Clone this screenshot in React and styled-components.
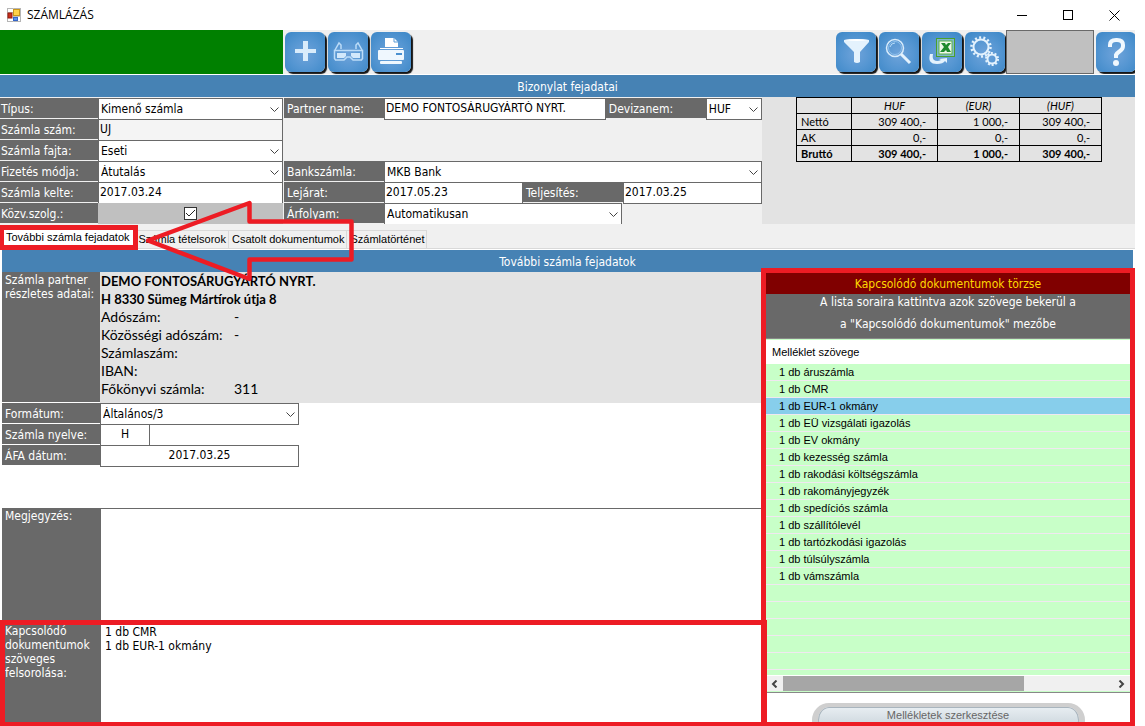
import React, { useState } from 'react';
import styled, { createGlobalStyle } from 'styled-components';

const RED = '#ed1c24';
const GRAY = '#696969';
const BLUE = '#4682b4';

const UI_FONT = '"DejaVu Sans Condensed", "DejaVu Sans", sans-serif';
const SMALL_FONT = '"Liberation Sans", Arial, sans-serif';
const REPORT_FONT = 'Lato, sans-serif';

const documents = [
  '1 db áruszámla',
  '1 db CMR',
  '1 db EUR-1 okmány',
  '1 db EÜ vizsgálati igazolás',
  '1 db EV okmány',
  '1 db kezesség számla',
  '1 db rakodási költségszámla',
  '1 db rakományjegyzék',
  '1 db spedíciós számla',
  '1 db szállítólevél',
  '1 db tartózkodási igazolás',
  '1 db túlsúlyszámla',
  '1 db vámszámla',
];

const totals = [
  { name: 'Nettó', values: ['309 400,-', '1 000,-', '309 400,-'] },
  { name: 'AK', values: ['0,-', '0,-', '0,-'] },
  { name: 'Bruttó', values: ['309 400,-', '1 000,-', '309 400,-'], strong: true },
];

const partnerLines = [
  ['Adószám:', '-'],
  ['Közösségi adószám:', '-'],
  ['Számlaszám:', ''],
  ['IBAN:', ''],
  ['Főkönyvi számla:', '311'],
];

const tabs = ['További számla fejadatok', 'Számla tételsorok', 'Csatolt dokumentumok', 'Számlatörténet'];

/* ---------- icons ---------- */

const AppIcon = () => (
  <svg width="14" height="14" viewBox="0 0 14 14" aria-hidden="true">
    <rect x="0.5" y="0.5" width="13" height="13" fill="#fff" stroke="#b5b5b5" />
    <path d="M6.5 0v14M0 4.500h6M6.500 8.500h7" stroke="#c0c0c0" />
    <rect x="6.500" y="1.500" width="6" height="6" fill="#ffd24a" stroke="#c9971c" />
    <rect x="1" y="5" width="4" height="5" fill="#c8301c" stroke="#96180c" />
    <rect x="6.500" y="9.500" width="4" height="3" fill="#5d94ee" stroke="#3566c8" />
  </svg>
);

const PlusIcon = () => (
  <svg width="40" height="40" viewBox="0 0 40 40" aria-hidden="true">
    <path d="M18 9h5v8h8v4h-8v8h-5v-8h-8v-4h8z" fill="#d9ecfb" />
  </svg>
);

const GlassesIcon = () => (
  <svg width="40" height="40" viewBox="0 0 40 40" fill="none" aria-hidden="true">
    <path d="M7 18l4-7l2 2v4M34 18l-4-7l-2 2v4" stroke="#bcdcf8" strokeWidth="1.500" />
    <path d="M6.500 18.500h28v8l-1 1.500h-8.500l-3-3h-3l-3 3H7.500l-1-1.500z" stroke="#bcdcf8" strokeWidth="1.500" />
    <path d="M9 21h9v3l-2 2H9zM23 21h9v5h-7l-2-2z" fill="#d2e8fb" />
  </svg>
);

const PrinterIcon = () => (
  <svg width="40" height="40" viewBox="0 0 40 40" aria-hidden="true">
    <path d="M14 6h9l4 4v5H14z" fill="#fff" />
    <path d="M23 6v4h4" fill="none" stroke="#5b9bd5" />
    <path d="M9 16h23v1H9z" fill="#fff" />
    <rect x="7" y="18" width="26" height="10" rx="1" fill="#eff7fe" />
    <rect x="25" y="21" width="6" height="2" fill="#4a90d0" />
    <rect x="9" y="29" width="22" height="3" rx="1" fill="#eff7fe" />
  </svg>
);

const FilterIcon = () => (
  <svg width="40" height="40" viewBox="0 0 40 40" aria-hidden="true">
    <path d="M8 8q12-2 25 0v2l-9 10v10q-3 2-6 0V20L8 10z" fill="#e4f2fd" />
    <path d="M8 8q12-2 25 0q-12 2-25 0z" fill="#fff" />
  </svg>
);

const SearchIcon = () => (
  <svg width="40" height="40" viewBox="0 0 40 40" fill="none" aria-hidden="true">
    <circle cx="16" cy="16" r="8.500" stroke="#d9ecfb" strokeWidth="1.500" />
    <circle cx="16" cy="16" r="6.500" stroke="#8fc0ec" />
    <path d="M11 15q1-4 5-4" stroke="#b8dbf7" />
    <path d="M22 22l9 9" stroke="#e4f2fd" strokeWidth="3" />
  </svg>
);

const ExcelIcon = () => (
  <svg width="40" height="40" viewBox="0 0 40 40" aria-hidden="true">
    <rect x="14.500" y="6.500" width="18" height="18" fill="#7fb8c8" stroke="#4aa02c" />
    <rect x="17" y="9" width="13" height="13" fill="#eef8ea" stroke="#5ab04a" />
    <path d="M19 11h4l1 2 2-2h3l-3 4 3 5h-4l-1-2-2 2h-4l4-5z" fill="#1f8a2e" />
    <path d="M8 22q-3 10 7 10q6 0 8-3l2 2v-5l-8 1 2 1q-4 2-7 0q-2-2-1-6z" fill="#e4f2fd" />
  </svg>
);

const GearsIcon = () => (
  <svg width="40" height="40" viewBox="0 0 40 40" fill="none" aria-hidden="true">
    <circle cx="16" cy="15" r="7.500" stroke="#e4f2fd" strokeWidth="2" />
    <circle cx="16" cy="15" r="9.500" stroke="#e4f2fd" strokeWidth="2.500" strokeDasharray="2 2.260" />
    <circle cx="27" cy="27" r="4.500" stroke="#e4f2fd" strokeWidth="2" />
    <circle cx="27" cy="27" r="6" stroke="#e4f2fd" strokeWidth="2" strokeDasharray="2 1.770" />
  </svg>
);

const HelpIcon = () => (
  <svg width="40" height="40" viewBox="0 0 40 40" fill="none" aria-hidden="true">
    <path d="M14 15v-2q0-5 6-5h1q6 0 6 5v1q0 3-3 5t-4 4v3" stroke="#f0f8fe" strokeWidth="4" />
    <circle cx="20" cy="31" r="3" fill="#f0f8fe" />
  </svg>
);

const Chevron = () => (
  <svg width="9" height="6" viewBox="0 0 9 6" aria-hidden="true">
    <path d="M0.500 0.500l4 4 4-4" fill="none" stroke="#444" />
  </svg>
);

const ArrowMark = () => (
  <svg width="212" height="88" viewBox="0 0 212 88" aria-hidden="true">
    <path
      d="M4 42.500L105.500 5V23.500H207.500V61.500H105.500V81z"
      fill="none"
      stroke={RED}
      strokeWidth="4.500"
      strokeLinejoin="round"
    />
  </svg>
);

/* ---------- layout ---------- */

const GlobalStyle = createGlobalStyle`
  * { box-sizing: border-box; }
  body { margin: 0; background: #fff; }
  button, input, select, textarea { font: inherit; margin: 0; border-radius: 0; }
`;

const Window = styled.div`
  display: flex;
  flex-direction: column;
  height: 100vh;
  padding-right: 10px;
  overflow: hidden;
  background: #fff;
  color: #000;
  font: 12px/14px ${UI_FONT};
`;

const TitleBar = styled.header`
  display: flex;
  align-items: center;
  flex: none;
  height: 30px;
  padding: 0 7px;
  gap: 6px;

  h1 {
    flex: 1;
    margin: 0;
    font: 12px/16px "Open Sans", sans-serif;
  }
`;

const WindowButton = styled.button`
  display: flex;
  align-items: center;
  justify-content: center;
  width: 40px;
  height: 28px;
  padding: 0;
  border: 0;
  background: none;

  &:last-child { width: 28px; margin-left: 6px; }
`;

const Toolbar = styled.div`
  display: flex;
  flex: none;
  height: 45px;
  background: #f0f0f0;
  border-bottom: 1px solid #fff;
`;

const StatusBlock = styled.div`
  width: 283px;
  background: #008000;
`;

const ToolGroup = styled.div`
  display: flex;
  gap: 3px;
  padding: ${({ $end }) => ($end ? '2px 1px' : '2px')};
  margin-left: ${({ $end }) => ($end ? 'auto' : '0')};
`;

const ToolButton = styled.button`
  width: 40px;
  height: 40px;
  padding: 0;
  border: 0;
  border-radius: 6px;
  background: radial-gradient(circle at 50% 55%, #6fa3da 0%, #5596d2 50%, #3a86c6 100%);
  box-shadow: 2px 2px 1px #151515;

  svg { display: block; }
`;

const Placeholder = styled.div`
  width: 88px;
  background: #c0c0c0;
  border: 1px solid ${GRAY};
`;

const HelpGroup = styled.div`
  width: 41px;
  padding: 2px;
  overflow: hidden;
`;

const SectionTitle = styled.h2`
  flex: none;
  height: 22px;
  margin: 0 ${({ $inset }) => ($inset ? '2px' : '0')};
  padding-top: 4px;
  background: ${BLUE};
  color: #fff;
  font: 12px/16px ${UI_FONT};
  text-align: center;
`;

const HeaderArea = styled.section`
  display: grid;
  grid-template-columns: minmax(0, 762fr) minmax(0, 373fr);
  flex: none;
  background: #f0f0f0;
`;

const HeaderForm = styled.form`
  padding-top: 1px;
`;

const FormRow = styled.div`
  display: flex;
  align-items: flex-start;
  height: 21px;
`;

const RowPart = styled.div`
  display: flex;
  flex: ${({ $grow }) => $grow} 1 0;
  min-width: 0;
  margin-left: ${({ $gap }) => ($gap ? '1px' : '0')};
`;

const Label = styled.label`
  flex: none;
  width: ${({ $narrow }) => ($narrow ? '98px' : '100px')};
  height: 20px;
  padding: 4px 0 0 ${({ $first }) => ($first ? '1px' : '3px')};
  background: ${GRAY};
  color: #fff;
  white-space: nowrap;
`;

const Input = styled.input`
  flex: ${({ $grow }) => $grow || 1} 1 0;
  min-width: 0;
  height: 22px;
  padding: 0 1px 3px;
  border: 1px solid ${GRAY};
  background: ${({ readOnly }) => (readOnly ? '#f4f4f4' : '#fff')};
  text-align: ${({ $center }) => ($center ? 'center' : 'left')};
  outline: 0;
`;

const SelectBox = styled.div`
  position: relative;
  flex: ${({ $grow }) => $grow || 1} 1 0;
  min-width: 0;
  height: 22px;

  select {
    display: block;
    width: 100%;
    height: 22px;
    padding: 0 20px 1px 2px;
    appearance: none;
    border: 1px solid ${GRAY};
    background: #fff;
    color: #000;
    outline: 0;
  }

  svg {
    position: absolute;
    top: 9px;
    right: 4px;
    pointer-events: none;
  }
`;

const CheckCell = styled.div`
  display: flex;
  align-items: center;
  justify-content: center;
  flex: 1;
  height: 21px;
  background: #c0c0c0;

  input {
    width: 13px;
    height: 13px;
    appearance: none;
    border: 1px solid #333;
    background: #fff;
  }

  svg {
    position: absolute;
    pointer-events: none;
  }
`;

const Spacer = styled.div`
  flex: ${({ $grow }) => $grow} 1 0;
`;

const TotalsPane = styled.div`
  padding-left: 34px;
  background: #e3e3e3;
`;

const TotalsTable = styled.table`
  border-collapse: collapse;
  font: 11px/15px ${REPORT_FONT};

  th, td {
    height: 16px;
    padding: 0 11px 0 4px;
    border: 1px solid #000;
    text-align: right;
    font-weight: inherit;
  }

  th[scope='row'] { text-align: left; }
  thead th { padding: 0 4px; text-align: center; font-style: italic; font-weight: 400; }
`;

const TotalsRow = styled.tr`
  font-weight: ${({ $strong }) => ($strong ? 700 : 400)};
`;

const TabBar = styled.div`
  position: relative;
  display: flex;
  align-items: flex-end;
  flex: none;
  height: 25px;
  margin-bottom: 1px;
  background: #f0f0f0;
  border-bottom: 1px solid #d9d9d9;
  font: 11px/13px ${SMALL_FONT};
`;

const Tab = styled.button`
  height: 18px;
  padding: 0 2px 0 3px;
  border: 1px solid #d9d9d9;
  border-width: 1px 1px 0 0;
  background: #f0f0f0;
  white-space: nowrap;

  &[aria-selected='true'] {
    height: 21px;
    padding: 0 5px 2px 6px;
    background: #fff;
  }
`;

const TabMark = styled.div`
  position: absolute;
  inset: 1px auto -2px -1px;
  width: 139px;
  border: 5px solid ${RED};
  pointer-events: none;
  z-index: 3;
`;

const ArrowPlace = styled.div`
  position: absolute;
  left: 144px;
  top: -26px;
  z-index: 3;
  pointer-events: none;
`;

const Body = styled.section`
  display: grid;
  grid-template-columns: minmax(0, 759fr) minmax(0, 374fr);
  grid-template-rows: minmax(0, 1fr);
  flex: 1;
  min-height: 0;
  padding-left: 2px;
`;

const Details = styled.form`
  display: flex;
  flex-direction: column;
  min-height: 0;
`;

const PartnerRow = styled.div`
  display: flex;
  flex: none;
  height: 131px;
  background: #e3e3e3;
`;

const SideLabel = styled.label`
  flex: none;
  width: 98px;
  padding: 1px 3px 0;
  background: ${GRAY};
  border-bottom: ${({ $line }) => ($line ? '1px solid #fff' : '0')};
  color: #fff;
`;

const PartnerInfo = styled.div`
  padding: 0 1px;
  font: 14px/18px ${REPORT_FONT};

  p { margin: 0; font-size: 13px; font-weight: 700; }
  dl { display: grid; grid-template-columns: 133px auto; margin: 0; }
  dt { height: 18px; }
  dd { margin: 0; }
`;

const ShortRow = styled(FormRow)`
  width: ${({ $short }) => ($short ? '148px' : '297px')};
`;

const NoteRow = styled.div`
  position: relative;
  display: flex;
  flex: ${({ $fill }) => ($fill ? '1 1 0' : '0 0 115px')};
  min-height: 0;
  margin-top: ${({ $fill }) => ($fill ? '0' : '42px')};

  textarea {
    flex: 1;
    min-width: 0;
    padding: 2px 4px;
    border: 0 solid ${GRAY};
    border-width: ${({ $fill }) => ($fill ? '0 0 0 1px' : '1px 0 0 1px')};
    resize: none;
    outline: 0;
    background: #fff;
  }
`;

const NoteMark = styled.div`
  position: absolute;
  inset: -3px -6px 0 -2px;
  border: 5px solid ${RED};
  border-bottom-width: 4px;
  pointer-events: none;
  z-index: 2;
`;

const DocPanel = styled.aside`
  position: relative;
  display: flex;
  flex-direction: column;
  min-height: 0;
  margin-top: -4px;
  border: 5px solid ${RED};
  border-bottom-width: 4px;
  background: #fff;
  z-index: 1;
`;

const DocTitle = styled.h3`
  flex: none;
  height: 21px;
  margin: 0;
  padding-top: 3px;
  background: #800000;
  color: #ffd700;
  font: 12px/16px ${UI_FONT};
  text-align: center;
`;

const DocHint = styled.p`
  flex: none;
  height: 45px;
  margin: 0;
  background: ${GRAY};
  border-bottom: 1px solid #888;
  color: #fff;
  line-height: 22px;
  text-align: center;

  span { display: block; margin-top: -3px; }
  span + span { margin-top: 0; }
`;

const DocList = styled.div`
  flex: 1;
  min-height: 0;
  overflow: hidden;
  border-top: 1px solid #c8ffc8;

  table {
    width: 100%;
    border-spacing: 0;
    font: 11px/14px ${SMALL_FONT};
  }

  th {
    height: 24px;
    padding: 0 6px;
    background: #fff;
    text-align: left;
    font-weight: 400;
  }
`;

const DocRow = styled.tr`
  background: ${({ $selected }) => ($selected ? '#87ceeb' : '#c8ffc8')};

  td {
    height: 17px;
    padding: 1px 13px;
    border-bottom: 1px solid #f0e8f0;
  }
`;

const ScrollBar = styled.div`
  display: flex;
  flex: none;
  height: 17px;
  background: #f0f0f0;
  border-top: 1px solid #fff;
  border-bottom: 1px solid #c8ffc8;

  button {
    width: 17px;
    padding: 0;
    border: 0;
    background: none;
    line-height: 0;
  }
`;

const Track = styled.div`
  flex: 1;

  div { width: 73%; height: 15px; background: #a6a6a6; }
`;

const DocFooter = styled.div`
  display: flex;
  justify-content: center;
  flex: none;
  height: 30px;
  padding-top: 10px;
  border-top: 1px solid #888;
  overflow: hidden;
`;

const EditButton = styled.button`
  display: flex;
  justify-content: center;
  align-items: flex-start;
  width: 75%;
  height: 34px;
  padding: 2px 0 0;
  border: 4px solid #cfcfcf;
  border-width: 4px 6px;
  border-radius: 17px;
  background: linear-gradient(#e8eef2, #c3ced6);
  box-shadow: inset 0 0 0 1px #a9b5be;
  color: #666;
  font: 11px/13px ${SMALL_FONT};
`;

const Select = ({ id, value, grow }) => (
  <SelectBox $grow={grow}>
    <select id={id} defaultValue={value}>
      <option>{value}</option>
    </select>
    <Chevron />
  </SelectBox>
);

const App = () => {
  const [activeTab, setActiveTab] = useState(0);
  const [selected, setSelected] = useState(2);
  const [mediated, setMediated] = useState(true);

  return (
    <Window>
      <GlobalStyle />
      <TitleBar>
        <AppIcon />
        <h1>SZÁMLÁZÁS</h1>
        <WindowButton aria-label="Minimize">
          <svg width="11" height="11"><path d="M0 5.500h10" stroke="#000" /></svg>
        </WindowButton>
        <WindowButton aria-label="Maximize">
          <svg width="11" height="11"><rect x="0.500" y="0.500" width="9" height="9" fill="none" stroke="#000" /></svg>
        </WindowButton>
        <WindowButton aria-label="Close">
          <svg width="11" height="11"><path d="M0.500 0.500l10 10M10.500 0.500l-10 10" stroke="#000" /></svg>
        </WindowButton>
      </TitleBar>

      <Toolbar>
        <StatusBlock />
        <ToolGroup>
          <ToolButton aria-label="Új"><PlusIcon /></ToolButton>
          <ToolButton aria-label="Megtekintés"><GlassesIcon /></ToolButton>
          <ToolButton aria-label="Nyomtatás"><PrinterIcon /></ToolButton>
        </ToolGroup>
        <ToolGroup $end>
          <ToolButton aria-label="Szűrés"><FilterIcon /></ToolButton>
          <ToolButton aria-label="Keresés"><SearchIcon /></ToolButton>
          <ToolButton aria-label="Excel"><ExcelIcon /></ToolButton>
          <ToolButton aria-label="Beállítások"><GearsIcon /></ToolButton>
        </ToolGroup>
        <Placeholder />
        <HelpGroup>
          <ToolButton aria-label="Súgó"><HelpIcon /></ToolButton>
        </HelpGroup>
      </Toolbar>

      <SectionTitle>Bizonylat fejadatai</SectionTitle>
      <HeaderArea>
        <HeaderForm>
          <FormRow>
            <RowPart $grow={283}>
              <Label $first $narrow htmlFor="type">Típus:</Label>
              <Select id="type" value="Kimenő számla" />
            </RowPart>
            <RowPart $grow={478} $gap>
              <Label htmlFor="partner">Partner name:</Label>
              <Input id="partner" $grow={221} defaultValue="DEMO FONTOSÁRUGYÁRTÓ NYRT." />
              <Label htmlFor="currency">Devizanem:</Label>
              <Select id="currency" value="HUF" grow={57} />
            </RowPart>
          </FormRow>
          <FormRow>
            <RowPart $grow={283}>
              <Label $first $narrow htmlFor="number">Számla szám:</Label>
              <Input id="number" readOnly defaultValue="UJ" />
            </RowPart>
            <RowPart $grow={478} $gap />
          </FormRow>
          <FormRow>
            <RowPart $grow={283}>
              <Label $first $narrow htmlFor="kind">Számla fajta:</Label>
              <Select id="kind" value="Eseti" />
            </RowPart>
            <RowPart $grow={478} $gap />
          </FormRow>
          <FormRow>
            <RowPart $grow={283}>
              <Label $first $narrow htmlFor="payment">Fizetés módja:</Label>
              <Select id="payment" value="Átutalás" />
            </RowPart>
            <RowPart $grow={478} $gap>
              <Label htmlFor="bank">Bankszámla:</Label>
              <Select id="bank" value="MKB Bank" />
            </RowPart>
          </FormRow>
          <FormRow>
            <RowPart $grow={283}>
              <Label $first $narrow htmlFor="issued">Számla kelte:</Label>
              <Input id="issued" defaultValue="2017.03.24" />
            </RowPart>
            <RowPart $grow={478} $gap>
              <Label htmlFor="due">Lejárat:</Label>
              <Input id="due" defaultValue="2017.05.23" />
              <Label htmlFor="fulfilled">Teljesítés:</Label>
              <Input id="fulfilled" defaultValue="2017.03.25" />
            </RowPart>
          </FormRow>
          <FormRow>
            <RowPart $grow={283}>
              <Label $first $narrow htmlFor="mediated">Közv.szolg.:</Label>
              <CheckCell>
                <input
                  id="mediated"
                  type="checkbox"
                  checked={mediated}
                  onChange={() => setMediated(!mediated)}
                />
                {mediated && (
                  <svg width="11" height="9" viewBox="0 0 11 9">
                    <path d="M1 4l3 3 6-6" fill="none" stroke="#222" />
                  </svg>
                )}
              </CheckCell>
            </RowPart>
            <RowPart $grow={478} $gap>
              <Label htmlFor="rate">Árfolyam:</Label>
              <Select id="rate" value="Automatikusan" grow={238} />
              <Spacer $grow={140} />
            </RowPart>
          </FormRow>
        </HeaderForm>

        <TotalsPane>
          <TotalsTable>
            <colgroup>
              <col width="55" />
              <col width="86" />
              <col width="82" />
              <col width="82" />
            </colgroup>
            <thead>
              <tr>
                <th></th>
                <th>HUF</th>
                <th>(EUR)</th>
                <th>(HUF)</th>
              </tr>
            </thead>
            <tbody>
              {totals.map((row) => (
                <TotalsRow key={row.name} $strong={row.strong}>
                  <th scope="row">{row.name}</th>
                  {row.values.map((value, i) => <td key={i}>{value}</td>)}
                </TotalsRow>
              ))}
            </tbody>
          </TotalsTable>
        </TotalsPane>
      </HeaderArea>

      <TabBar role="tablist">
        {tabs.map((tab, i) => (
          <Tab key={tab} role="tab" aria-selected={activeTab === i} onClick={() => setActiveTab(i)}>
            {tab}
          </Tab>
        ))}
        <TabMark />
        <ArrowPlace><ArrowMark /></ArrowPlace>
      </TabBar>

      <SectionTitle $inset>További számla fejadatok</SectionTitle>
      <Body>
        <Details>
          <PartnerRow>
            <SideLabel as="div" $line>Számla partner részletes adatai:</SideLabel>
            <PartnerInfo>
              <p>DEMO FONTOSÁRUGYÁRTÓ NYRT.</p>
              <p>H 8330 Sümeg Mártírok útja 8</p>
              <dl>
                {partnerLines.map(([name, value]) => (
                  <React.Fragment key={name}>
                    <dt>{name}</dt>
                    <dd>{value}</dd>
                  </React.Fragment>
                ))}
              </dl>
            </PartnerInfo>
          </PartnerRow>
          <ShortRow>
            <Label $narrow htmlFor="format">Formátum:</Label>
            <Select id="format" value="Általános/3" />
          </ShortRow>
          <ShortRow $short>
            <Label $narrow htmlFor="language">Számla nyelve:</Label>
            <Input id="language" $center defaultValue="H" />
          </ShortRow>
          <ShortRow>
            <Label $narrow htmlFor="vatDate">ÁFA dátum:</Label>
            <Input id="vatDate" $center defaultValue="2017.03.25" />
          </ShortRow>
          <NoteRow>
            <SideLabel htmlFor="note">Megjegyzés:</SideLabel>
            <textarea id="note" />
          </NoteRow>
          <NoteRow $fill>
            <SideLabel htmlFor="related">Kapcsolódó dokumentumok szöveges felsorolása:</SideLabel>
            <textarea id="related" defaultValue={'1 db CMR\n1 db EUR-1 okmány'} />
            <NoteMark />
          </NoteRow>
        </Details>

        <DocPanel>
          <DocTitle>Kapcsolódó dokumentumok törzse</DocTitle>
          <DocHint>
            <span>A lista soraira kattintva azok szövege bekerül a</span>
            <span>a "Kapcsolódó dokumentumok" mezőbe</span>
          </DocHint>
          <DocList>
            <table>
              <thead>
                <tr><th>Melléklet szövege</th></tr>
              </thead>
              <tbody>
                {documents.map((doc, i) => (
                  <DocRow key={doc} $selected={selected === i} onClick={() => setSelected(i)}>
                    <td>{doc}</td>
                  </DocRow>
                ))}
                {[...Array(6)].map((_, i) => (
                  <DocRow key={i}><td></td></DocRow>
                ))}
              </tbody>
            </table>
          </DocList>
          <ScrollBar>
            <button aria-label="Balra">
              <svg width="7" height="8"><path d="M5.500 0.500L2 4l3.500 3.500" fill="none" stroke="#444" strokeWidth="2" /></svg>
            </button>
            <Track><div /></Track>
            <button aria-label="Jobbra">
              <svg width="7" height="8"><path d="M1.500 0.500L5 4 1.500 7.500" fill="none" stroke="#444" strokeWidth="2" /></svg>
            </button>
          </ScrollBar>
          <DocFooter>
            <EditButton>Mellékletek szerkesztése</EditButton>
          </DocFooter>
        </DocPanel>
      </Body>
    </Window>
  );
};

export default App;
